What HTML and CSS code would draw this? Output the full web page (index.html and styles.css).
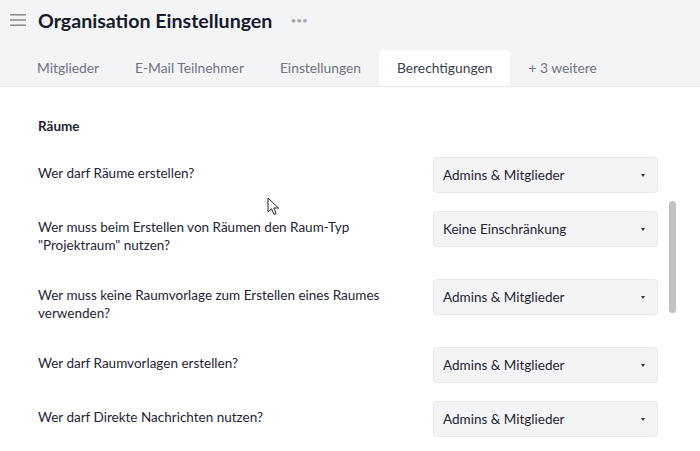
FILE: index.html
```html
<!DOCTYPE html>
<html lang="de">
<head>
    <meta charset="UTF-8">
    <title>Organisation Einstellungen</title>
    <link rel="stylesheet" href="styles.css">
</head>
<body>
    <div class="header">
        <div class="title-row">
            <svg class="menu-icon" width="16" height="14" viewBox="0 0 16 14">
                <rect x="0" y="1" width="16" height="1.6" fill="#8f8e96"/>
                <rect x="0" y="6.2" width="16" height="1.6" fill="#8f8e96"/>
                <rect x="0" y="11.4" width="16" height="1.6" fill="#8f8e96"/>
            </svg>
            <h1>Organisation Einstellungen</h1>
            <span class="more">&bull;&bull;&bull;</span>
        </div>
        <div class="tabs">
            <div class="tab">Mitglieder</div>
            <div class="tab">E-Mail Teilnehmer</div>
            <div class="tab">Einstellungen</div>
            <div class="tab active">Berechtigungen</div>
            <div class="tab">+ 3 weitere</div>
        </div>
    </div>

    <div class="content">
        <h2>Räume</h2>

        <div class="setting">
            <div class="label">Wer darf Räume erstellen?</div>
            <div class="select">Admins &amp; Mitglieder <span class="caret"></span></div>
        </div>
        <div class="setting">
            <div class="label">Wer muss beim Erstellen von Räumen den Raum-Typ "Projektraum" nutzen?</div>
            <div class="select">Keine Einschränkung <span class="caret"></span></div>
        </div>
        <div class="setting">
            <div class="label">Wer muss keine Raumvorlage zum Erstellen eines Raumes verwenden?</div>
            <div class="select">Admins &amp; Mitglieder <span class="caret"></span></div>
        </div>
        <div class="setting">
            <div class="label">Wer darf Raumvorlagen erstellen?</div>
            <div class="select">Admins &amp; Mitglieder <span class="caret"></span></div>
        </div>
        <div class="setting">
            <div class="label">Wer darf Direkte Nachrichten nutzen?</div>
            <div class="select">Admins &amp; Mitglieder <span class="caret"></span></div>
        </div>

        <div class="scrollbar"></div>
    </div>

    <svg class="cursor" width="13" height="20" viewBox="0 0 13 20">
        <path d="M1 1 L1 15 L4.5 11.8 L7 17.5 L9.2 16.5 L6.8 11 L11.5 11 Z" fill="#fff" stroke="#222" stroke-width="1" stroke-linejoin="round"/>
    </svg>
</body>
</html>
```

FILE: styles.css
```css
body {
    margin: 0;
    width: 700px;
    height: 451px;
    overflow: hidden;
    font-family: Lato, "Open Sans", sans-serif;
    color: #1f2433;
    background: #fff;
    position: relative;
}

.header {
    background: #f3f4f6;
    border-bottom: 1px solid #e6e7ea;
}

.title-row {
    display: flex;
    align-items: center;
    height: 40px;
    padding-left: 10px;
}

.menu-icon {
    margin-right: 12px;
}

h1 {
    margin: 0;
    font-size: 19.6px;
    font-weight: 700;
    color: #161b2b;
}

.more {
    margin-left: 18px;
    color: #a3a5ad;
    font-size: 10px;
}

.tabs {
    display: flex;
    padding-left: 19px;
    margin-top: 10px;
}

.tab {
    padding: 0 18px;
    height: 36px;
    line-height: 36px;
    font-size: 13.8px;
    color: #6f7380;
}

.tab.active {
    background: #fff;
    color: #3a3f4d;
    border-radius: 5px 5px 0 0;
}

.content {
    padding: 30px 42px 0 38px;
}

h2 {
    margin: 0 0 22px;
    font-size: 13.5px;
    font-weight: 700;
    line-height: 18px;
}

.setting {
    display: flex;
    justify-content: space-between;
    align-items: flex-start;
    margin-bottom: 18px;
}

.label {
    width: 360px;
    padding: 7px 0;
    font-size: 13.5px;
    line-height: 18px;
}

.select {
    width: 225px;
    height: 36px;
    box-sizing: border-box;
    display: flex;
    align-items: center;
    justify-content: space-between;
    padding: 0 12px 0 9px;
    background: #f3f4f6;
    border: 1px solid #e8e9ec;
    border-radius: 4px;
    font-size: 13.5px;
}

.caret {
    width: 0;
    height: 0;
    border-left: 2.5px solid transparent;
    border-right: 2.5px solid transparent;
    border-top: 3px solid #333;
}

.scrollbar {
    position: absolute;
    left: 669px;
    top: 201px;
    width: 7px;
    height: 112px;
    border-radius: 4px;
    background: #c1c1c1;
}

.cursor {
    position: absolute;
    left: 267px;
    top: 197px;
}
```
